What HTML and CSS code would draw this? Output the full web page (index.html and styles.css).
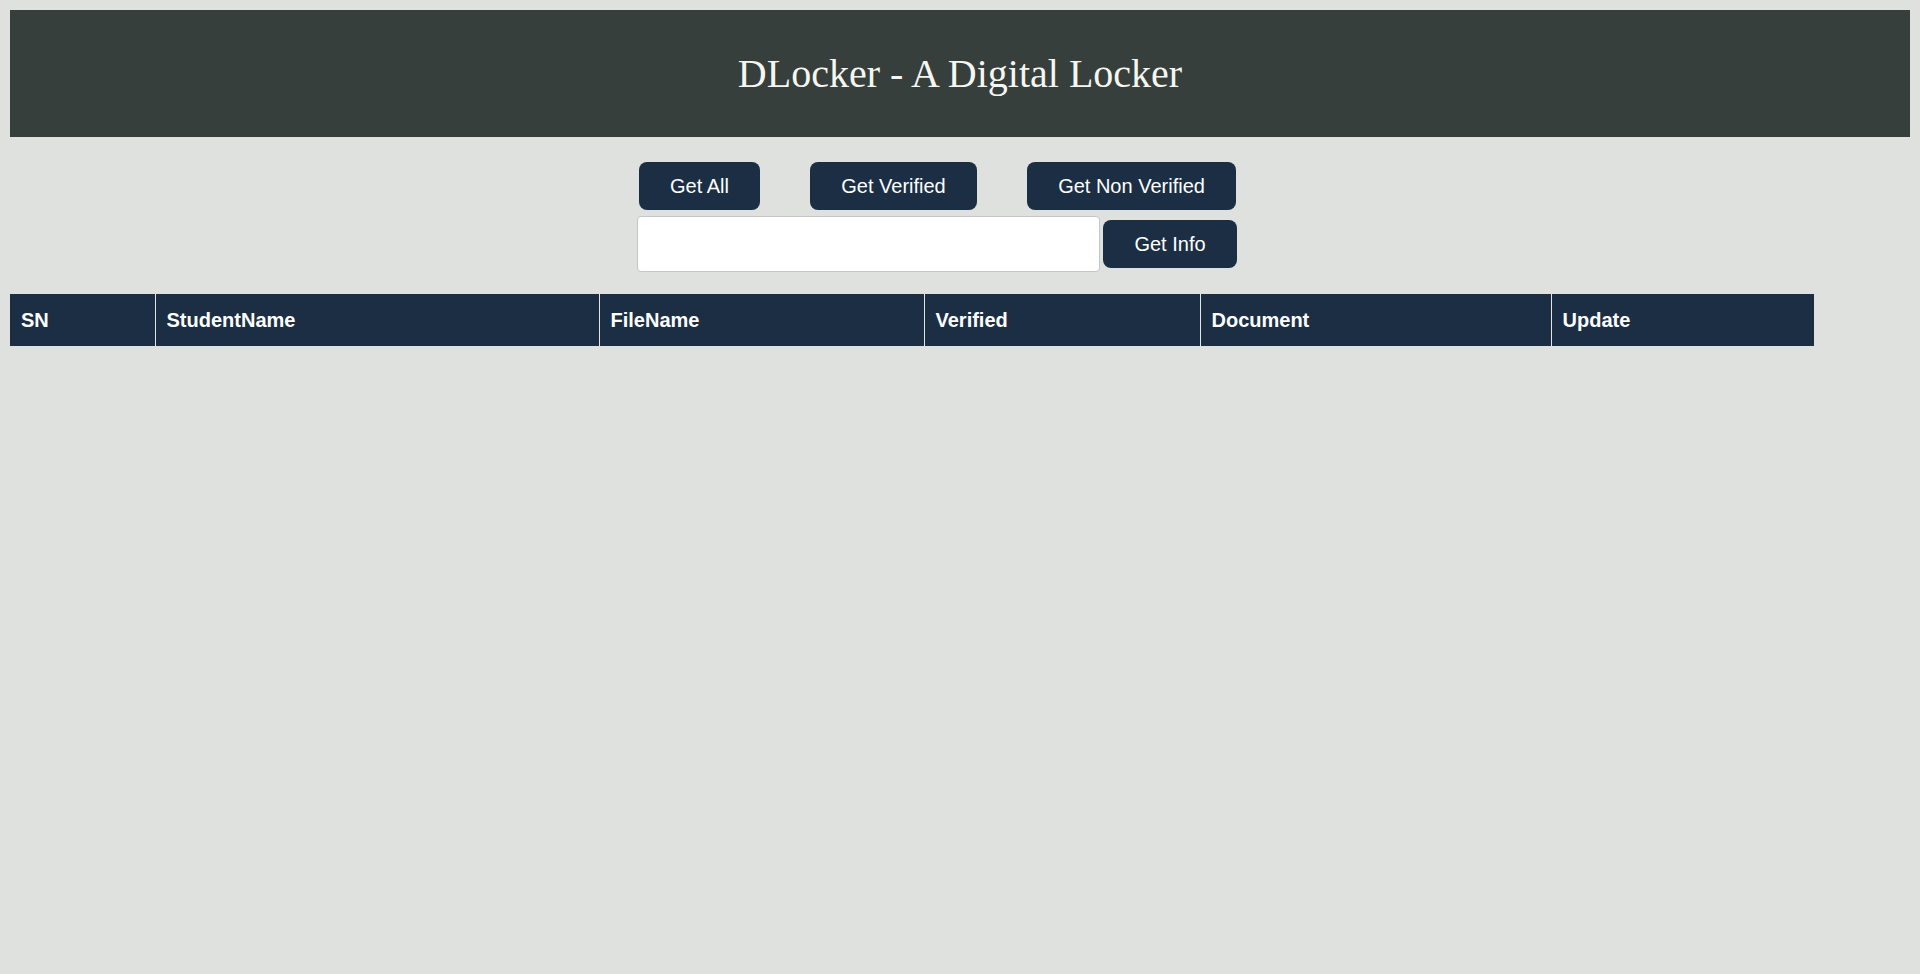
FILE: index.html
```html
<!DOCTYPE html>
<html>
<head>
<meta charset="utf-8">
<title>DLocker</title>
<link rel="stylesheet" href="styles.css">
</head>
<body>
<header class="banner">
  <h1 class="title">DLocker - A Digital Locker</h1>
</header>
<section class="controls">
  <div class="btn-row">
    <button class="btn btn-all">Get All</button>
    <button class="btn btn-verified">Get Verified</button>
    <button class="btn btn-nonverified">Get Non Verified</button>
  </div>
  <div class="search-row">
    <input class="search-input" type="text">
    <button class="btn btn-info">Get Info</button>
  </div>
</section>
<table class="records">
  <colgroup>
    <col class="c-sn"><col class="c-name"><col class="c-file"><col class="c-ver"><col class="c-doc"><col class="c-upd">
  </colgroup>
  <thead>
    <tr>
      <th>SN</th>
      <th>StudentName</th>
      <th>FileName</th>
      <th>Verified</th>
      <th>Document</th>
      <th>Update</th>
    </tr>
  </thead>
  <tbody></tbody>
</table>
</body>
</html>
```
FILE: styles.css
```css
html, body {
  background: #dfe1de;
}
body {
  margin: 10px;
  font-family: "Liberation Sans", Arial, sans-serif;
}
.banner {
  background: #373f3c;
  padding: 40px 0 39px;
}
.title {
  margin: 0;
  font-family: "Liberation Serif", "Times New Roman", serif;
  font-weight: normal;
  font-size: 40px;
  line-height: 48px;
  color: #f6f6f1;
  text-align: center;
}
.controls {
  width: 646px;
  margin: 25px auto 0;
  display: flex;
  flex-direction: column;
  gap: 6px;
}
.btn-row {
  display: flex;
  gap: 50px;
  padding-left: 2px;
}
.btn {
  background: #1b2e44;
  color: #ffffff;
  border: none;
  border-radius: 8px;
  height: 48px;
  padding: 0;
  font-family: "Liberation Sans", Arial, sans-serif;
  font-size: 20px;
  cursor: pointer;
}
.btn-all { width: 121px; }
.btn-verified { width: 167px; }
.btn-nonverified { width: 209px; }
.btn-info { width: 134px; }
.search-row {
  display: flex;
  align-items: center;
  gap: 3px;
}
.search-input {
  box-sizing: border-box;
  width: 463px;
  height: 56px;
  margin: 0;
  border: 1px solid #c6c6c6;
  border-radius: 4px;
  background: #ffffff;
  font-size: 18px;
}
.records {
  margin-top: 22px;
  width: 1804px;
  table-layout: fixed;
  border-collapse: collapse;
  background: #1b2e44;
}
.c-sn { width: 145px; }
.c-name { width: 444px; }
.c-file { width: 325px; }
.c-ver { width: 276px; }
.c-doc { width: 351px; }
.c-upd { width: 263px; }
.records th {
  border: 1px solid #e4e6e3;
  border-top: none;
  border-bottom: none;
  padding: 15px 11px;
  height: 22px;
  line-height: 22px;
  text-align: left;
  color: #ffffff;
  font-weight: bold;
  font-size: 20px;
}
.records th:first-child { border-left: none; }
.records th:last-child { border-right: none; }
```
